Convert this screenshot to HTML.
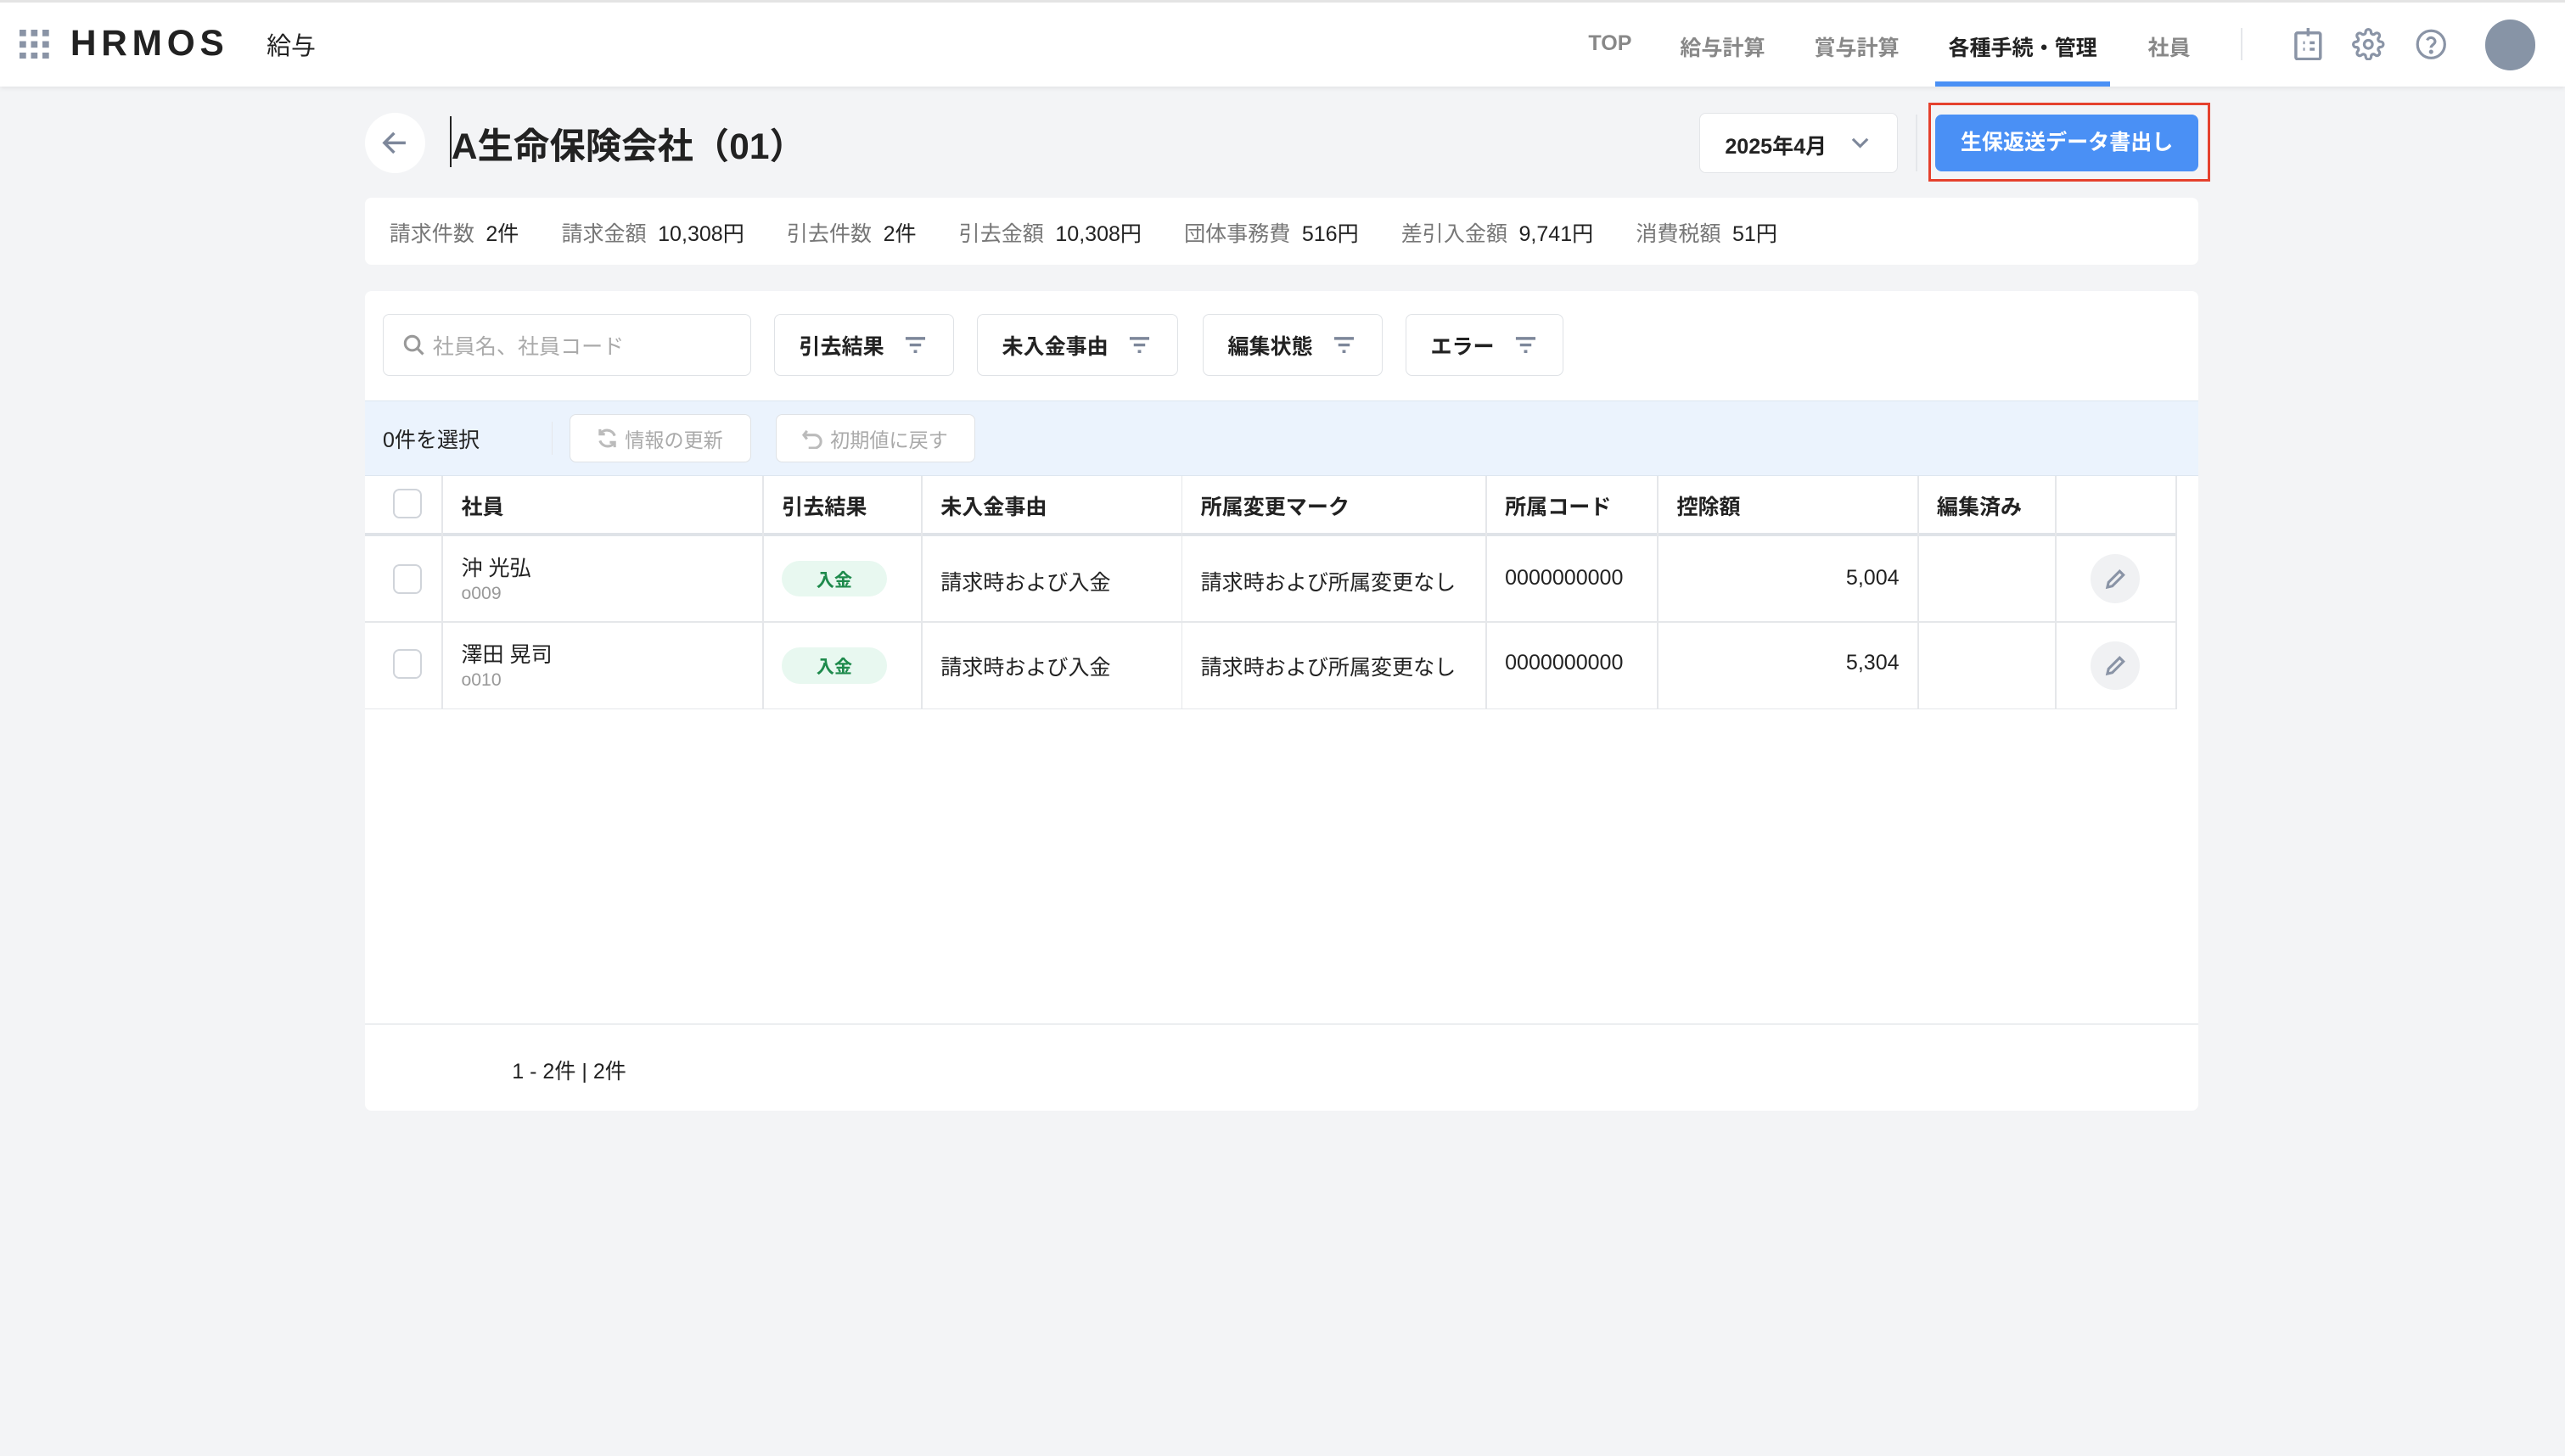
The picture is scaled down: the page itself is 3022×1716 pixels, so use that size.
<!DOCTYPE html>
<html><head><meta charset="utf-8"><style>
*{box-sizing:border-box;margin:0;padding:0}
html,body{width:3022px;height:1716px;overflow:hidden;background:#f3f4f6}
#w{zoom:1.9273;width:1568px;height:890px;position:relative;font-family:"Liberation Sans","Noto Sans CJK JP",sans-serif;color:#222;background:#f3f4f6}
.a{position:absolute}
.hdr{left:0;top:0;width:1568px;height:53px;background:#fff;box-shadow:0 1px 3px rgba(0,0,0,.08);border-top:2px solid #e4e4e4}
.nav{top:19px;font-size:13px;color:#888;font-weight:bold}
.card{background:#fff;border-radius:4px}
.fb{top:192px;height:38px;border:1px solid #dfe2e6;border-radius:4px;background:#fff;font-size:13px;font-weight:bold;display:flex;align-items:center;padding-left:15px}
.fb svg{margin-left:12px}
.tb{top:253px;height:30px;border:1px solid #dfe2e6;border-radius:4px;background:#fff;font-size:12px;color:#aaa;display:flex;align-items:center;justify-content:center;gap:4px}
.vl{width:1px;background:#e5e7ea}
.hl{height:1px;background:#e5e7ea}
.th{font-size:13px;font-weight:bold;top:300px}
.td{font-size:13px}
.cb{width:18px;height:18px;border:1.5px solid #d0d4da;border-radius:4px;background:#fff}
.pill{width:64px;height:22px;border-radius:11px;background:#e8f8f0;color:#1e8a4c;font-size:11px;font-weight:bold;display:flex;align-items:center;justify-content:center}
.ed{width:30px;height:30px;border-radius:15px;background:#f0f1f3;display:flex;align-items:center;justify-content:center}
.sm span{color:#222;margin-left:7px;margin-right:26px}
</style></head><body><div id="w">
<div class="a hdr"></div>
<svg class="a" style="left:12px;top:18px" width="18" height="18" viewBox="0 0 18 18" fill="#8a94a6"><rect x="0" y="0" width="4" height="4"/><rect x="7" y="0" width="4" height="4"/><rect x="14" y="0" width="4" height="4"/><rect x="0" y="7" width="4" height="4"/><rect x="7" y="7" width="4" height="4"/><rect x="14" y="7" width="4" height="4"/><rect x="0" y="14" width="4" height="4"/><rect x="7" y="14" width="4" height="4"/><rect x="14" y="14" width="4" height="4"/></svg>
<div class="a" style="left:43px;top:14px;font-size:22px;font-weight:900;letter-spacing:3px;color:#222">HRMOS</div>
<div class="a" style="left:163px;top:16px;font-size:15px">給与</div>
<div class="a nav" style="left:971px">TOP</div>
<div class="a nav" style="left:1027px">給与計算</div>
<div class="a nav" style="left:1109px">賞与計算</div>
<div class="a nav" style="left:1191px;color:#222">各種手続・管理</div>
<div class="a" style="left:1183px;top:50px;width:107px;height:3px;background:#4a90f5"></div>
<div class="a nav" style="left:1313px">社員</div>
<div class="a vl" style="left:1370px;top:17px;height:20px"></div>
<svg class="a" style="left:1402px;top:17px" width="18" height="20" viewBox="0 0 18 20" fill="none" stroke="#8a94a6" stroke-width="1.8"><rect x="1.5" y="3" width="15" height="16" rx="1"/><path d="M9 0v5M6 9h1M6 13h1M10 9h3M10 13h3"/></svg>
<svg class="a" style="left:1438px;top:17px" width="20" height="20" viewBox="0 0 24 24" fill="none" stroke="#8a94a6" stroke-width="2"><circle cx="12" cy="12" r="3"/><path d="M19.4 15a1.65 1.65 0 0 0 .33 1.82l.06.06a2 2 0 1 1-2.830 2.83l-.06-.06a1.65 1.65 0 0 0-2.82 1.17V21a2 2 0 0 1-4 0v-.09A1.65 1.65 0 0 0 9 19.4a1.65 1.65 0 0 0-1.82.33l-.06.06a2 2 0 1 1-2.830-2.83l.06-.06A1.65 1.65 0 0 0 3.2 14.1H3a2 2 0 0 1 0-4h.09A1.65 1.65 0 0 0 4.6 9a1.65 1.65 0 0 0-.33-1.82l-.06-.06a2 2 0 1 1 2.830-2.83l.06.06A1.65 1.65 0 0 0 9 4.6h0A1.65 1.65 0 0 0 10 3.09V3a2 2 0 0 1 4 0v.09a1.65 1.65 0 0 0 1 1.51 1.65 1.65 0 0 0 1.82-.33l.06-.06a2 2 0 1 1 2.83 2.83l-.06.06A1.65 1.65 0 0 0 19.4 9v0a1.65 1.65 0 0 0 1.51 1H21a2 2 0 0 1 0 4h-.09a1.65 1.65 0 0 0-1.51 1z"/></svg>
<svg class="a" style="left:1476px;top:17px" width="20" height="20" viewBox="0 0 24 24" fill="none" stroke="#8a94a6" stroke-width="2"><circle cx="12" cy="12" r="10"/><path d="M9.1 9a3 3 0 0 1 5.8 1c0 2-3 2.5-3 4.5"/><circle cx="12" cy="17.5" r=".6" fill="#8a94a6"/></svg>
<div class="a" style="left:1519px;top:12px;width:31px;height:31px;border-radius:50%;background:#8794a6"></div>

<div class="a" style="left:223px;top:69px;width:37px;height:37px;border-radius:50%;background:#fff"></div>
<svg class="a" style="left:233px;top:79px" width="17" height="17" viewBox="0 0 17 17" fill="none" stroke="#7d879a" stroke-width="1.8"><path d="M15 8.5H2M8 2.5l-6 6 6 6"/></svg>
<div class="a" style="left:275px;top:71px;width:1px;height:31px;background:#222"></div>
<div class="a" style="left:276px;top:72px;font-size:22px;font-weight:bold">A生命保険会社（01）</div>
<div class="a" style="left:1039px;top:69px;width:121px;height:37px;background:#fff;border:1px solid #e3e5e8;border-radius:4px;font-size:13px;font-weight:bold;padding:10px 0 0 15px">2025年4月</div>
<svg class="a" style="left:1131px;top:82px" width="12" height="10" viewBox="0 0 12 10" fill="none" stroke="#7d879a" stroke-width="1.6"><path d="M1.5 3l4.5 4.5 4.5-4.5"/></svg>
<div class="a vl" style="left:1171px;top:70px;height:35px"></div>
<div class="a" style="left:1183px;top:70px;width:161px;height:35px;background:#4a90f5;border-radius:4px;color:#fff;font-size:13px;font-weight:bold;text-align:center;line-height:35px">生保返送データ書出し</div>
<div class="a" style="left:1179px;top:63px;width:172px;height:48px;border:2px solid #e5412d"></div>

<div class="a card" style="left:223px;top:121px;width:1121px;height:41px"></div>
<div class="a sm" style="left:238px;top:133px;font-size:13px;color:#777;white-space:nowrap">請求件数<span>2件</span>請求金額<span>10,308円</span>引去件数<span>2件</span>引去金額<span>10,308円</span>団体事務費<span>516円</span>差引入金額<span>9,741円</span>消費税額<span>51円</span></div>

<div class="a card" style="left:223px;top:178px;width:1121px;height:501px"></div>
<div class="a fb" style="left:234px;width:225px;font-weight:normal;color:#aaa;padding-left:12px"><svg style="margin:0 5px 0 0" width="13" height="13" viewBox="0 0 13 13" fill="none" stroke="#999" stroke-width="1.6"><circle cx="5.5" cy="5.5" r="4.3"/><path d="M8.7 8.7l3.5 3.5"/></svg>社員名、社員コード</div>
<div class="a fb" style="left:473px;width:110px">引去結果<svg width="14" height="12" viewBox="0 0 14 12" stroke="#7d879a" stroke-width="1.8"><path d="M1 2h12M3.5 6h7M6 10h2"/></svg></div>
<div class="a fb" style="left:597px;width:123px">未入金事由<svg width="14" height="12" viewBox="0 0 14 12" stroke="#7d879a" stroke-width="1.8"><path d="M1 2h12M3.5 6h7M6 10h2"/></svg></div>
<div class="a fb" style="left:735px;width:110px">編集状態<svg width="14" height="12" viewBox="0 0 14 12" stroke="#7d879a" stroke-width="1.8"><path d="M1 2h12M3.5 6h7M6 10h2"/></svg></div>
<div class="a fb" style="left:859px;width:97px">エラー<svg width="14" height="12" viewBox="0 0 14 12" stroke="#7d879a" stroke-width="1.8"><path d="M1 2h12M3.5 6h7M6 10h2"/></svg></div>

<div class="a" style="left:223px;top:245px;width:1121px;height:46px;background:#ebf3fd;border-top:1px solid #dde6f0;border-bottom:1px solid #dde6f0"></div>
<div class="a" style="left:234px;top:259px;font-size:13px">0件を選択</div>
<div class="a vl" style="left:337px;top:258px;height:20px"></div>
<div class="a tb" style="left:348px;width:111px"><svg width="13" height="13" viewBox="0 0 13 13" fill="none" stroke="#bbb" stroke-width="1.6"><path d="M11 5A5 5 0 0 0 2 4M2 8a5 5 0 0 0 9 1M2 1v3h3M11 12V9H8"/></svg>情報の更新</div>
<div class="a tb" style="left:474px;width:122px"><svg width="13" height="13" viewBox="0 0 13 13" fill="none" stroke="#bbb" stroke-width="1.6"><path d="M3 2L1 4.5 3 7M1 4.5h6.5a4 4 0 0 1 0 8H4"/></svg>初期値に戻す</div>

<div class="a hl" style="left:223px;top:326px;width:1108px;height:2px;background:#dfe3e8"></div>
<div class="a hl" style="left:223px;top:380px;width:1108px"></div>
<div class="a hl" style="left:223px;top:433px;width:1108px"></div>
<div class="a vl" style="left:270px;top:291px;height:143px"></div>
<div class="a vl" style="left:466px;top:291px;height:143px"></div>
<div class="a vl" style="left:563px;top:291px;height:143px"></div>
<div class="a vl" style="left:722px;top:291px;height:143px"></div>
<div class="a vl" style="left:908px;top:291px;height:143px"></div>
<div class="a vl" style="left:1013px;top:291px;height:143px"></div>
<div class="a vl" style="left:1172px;top:291px;height:143px"></div>
<div class="a vl" style="left:1256px;top:291px;height:143px"></div>
<div class="a vl" style="left:1330px;top:291px;height:143px"></div>

<div class="a cb" style="left:240px;top:299px"></div>
<div class="a th" style="left:282px">社員</div>
<div class="a th" style="left:478px">引去結果</div>
<div class="a th" style="left:575px">未入金事由</div>
<div class="a th" style="left:734px">所属変更マーク</div>
<div class="a th" style="left:920px">所属コード</div>
<div class="a th" style="left:1025px">控除額</div>
<div class="a th" style="left:1184px">編集済み</div>

<div class="a cb" style="left:240px;top:345px"></div>
<div class="a td" style="left:282px;top:337px">沖 光弘</div>
<div class="a" style="left:282px;top:357px;font-size:11px;color:#999">o009</div>
<div class="a pill" style="left:478px;top:343px">入金</div>
<div class="a td" style="left:575px;top:346px">請求時および入金</div>
<div class="a td" style="left:734px;top:346px">請求時および所属変更なし</div>
<div class="a td" style="left:920px;top:346px">0000000000</div>
<div class="a td" style="left:1100px;top:346px;width:61px;text-align:right">5,004</div>
<div class="a ed" style="left:1278px;top:339px"><svg width="14" height="14" viewBox="0 0 14 14" fill="none" stroke="#8a94a6" stroke-width="1.6"><path d="M2 12l.7-3L9.5 2.2l2.3 2.3L5 11.3z"/></svg></div>

<div class="a cb" style="left:240px;top:397px"></div>
<div class="a td" style="left:282px;top:390px">澤田 晃司</div>
<div class="a" style="left:282px;top:410px;font-size:11px;color:#999">o010</div>
<div class="a pill" style="left:478px;top:396px">入金</div>
<div class="a td" style="left:575px;top:398px">請求時および入金</div>
<div class="a td" style="left:734px;top:398px">請求時および所属変更なし</div>
<div class="a td" style="left:920px;top:398px">0000000000</div>
<div class="a td" style="left:1100px;top:398px;width:61px;text-align:right">5,304</div>
<div class="a ed" style="left:1278px;top:392px"><svg width="14" height="14" viewBox="0 0 14 14" fill="none" stroke="#8a94a6" stroke-width="1.6"><path d="M2 12l.7-3L9.5 2.2l2.3 2.3L5 11.3z"/></svg></div>

<div class="a hl" style="left:223px;top:626px;width:1121px;background:#eceef0"></div>
<div class="a" style="left:313px;top:645px;font-size:13px">1 - 2件 | 2件</div>
</div></body></html>
